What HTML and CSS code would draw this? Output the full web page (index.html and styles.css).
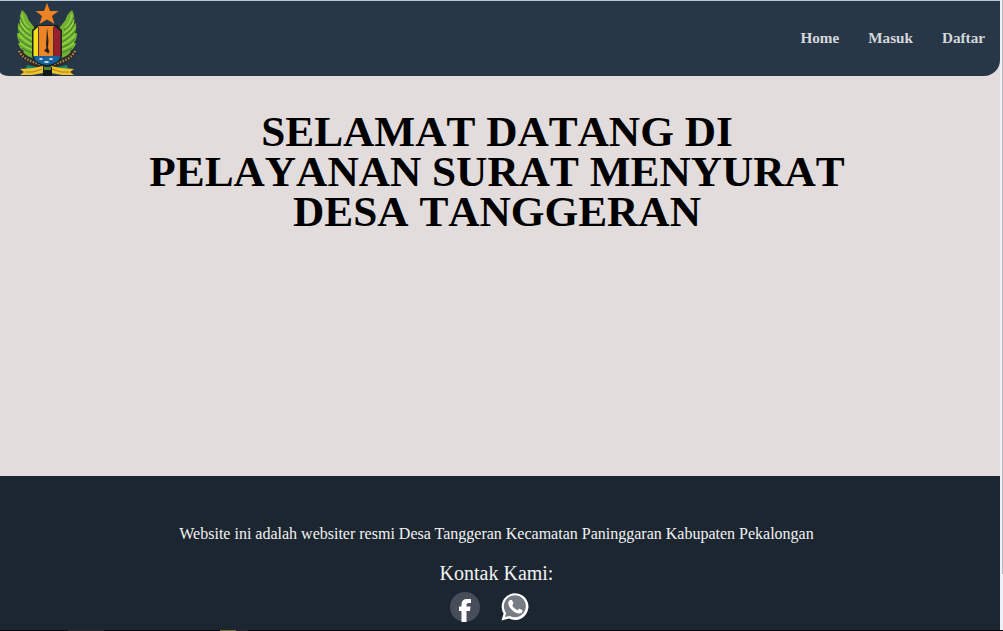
FILE: index.html
```html
<!DOCTYPE html>
<html lang="id">
<head>
<meta charset="utf-8">
<title>Desa Tanggeran</title>
<link rel="stylesheet" href="styles.css">
</head>
<body>
<div class="page">
  <header class="navbar">
    <svg class="logo" viewBox="0 0 64 74" width="64" height="74">
      <g id="wing">
        <path fill="#6fb232" d="M6 8Q11 12 12.500 18L18 25V56Q11 55 7 50L8 49Q3 46 2 41L4 41Q1 37 1 31L3 31Q1 26 2 21L4 22Q3 13 6 8Z"/>
        <path fill="none" stroke="#a0d345" stroke-width="1.200" d="M6 12Q7 21 13 26M4 18Q6 26 14 31M3 25Q7 33 16 37M3 33Q8 39 17 43M4 41Q10 46 17 48"/>
        <path fill="none" stroke="#356c27" stroke-width="0.800" d="M4 15Q6 23 14 28M3 22Q6 29 15 34M3 29Q8 36 16 40M3 37Q8 43 17 46M6 46Q12 50 17 51"/>
        <path fill="none" stroke="#2c2820" stroke-width="5" d="M3 49Q9 59 24 63"/>
        <path fill="none" stroke="#b08756" stroke-width="2.500" stroke-dasharray="1.500 1.500" d="M3 49Q8 59 25 62"/>
      </g>
      <use href="#wing" transform="matrix(-1 0 0 1 62 0)"/>
      <path fill="#ee8121" d="M31 1L34 9H42.500L36 14 38.500 22 31 17.500 23.500 22 26 14 19.500 9H28Z"/>
      <path fill="#18211e" d="M16 28Q19 26 21 23H41Q43 26 46 28V54Q44 62 31 65 18 62 16 54Z"/>
      <path fill="#f2df1d" d="M17.500 29L22 25V54H17.500Z"/>
      <path fill="#ee8424" d="M22 24H38V54H22Z"/>
      <path fill="#971f32" d="M38 24L44.500 29V54H38Z"/>
      <path fill="#222" d="M22 25H22.800V54H22ZM37.200 25H38V54H37.200ZM31 26L31.800 32 32.500 39 32 46 33.500 50 32 51.500 30.500 50 28 49 30.500 46 30 42 30.500 35Z"/>
      <path fill="#17609b" d="M17.500 54H44.500Q43 62 31 63 19 62 17.500 54Z"/>
      <path fill="none" stroke="#eff8ff" stroke-width="1.600" stroke-linecap="round" d="M24 57H26M34 57H36M29 60H32"/>
      <path fill="#16866d" d="M11 63L20 65 18 70 10 66ZM51 63L42 65 44 70 52 66Z"/>
      <path fill="#eac52c" d="M4 67L17 66 27 64V71L16 73H4L8 70ZM58 67L45 66 35 64V71L46 73H58L54 70Z"/>
      <path fill="none" stroke="#b67625" d="M9 70L17 70 26 67M53 70L45 70 36 67"/>
      <path fill="#10191a" d="M27 65H36V74H27Z"/>
      <path fill="#53882c" d="M28 65H35V68H28Z"/>
    </svg>
    <nav class="menu"><a>Home</a><a>Masuk</a><a>Daftar</a></nav>
  </header>
  <main class="hero">
    <h1>SELAMAT DATANG DI<br>PELAYANAN SURAT MENYURAT<br>DESA TANGGERAN</h1>
  </main>
  <footer class="footer">
    <p class="about">Website ini adalah websiter resmi Desa Tanggeran Kecamatan Paninggaran Kabupaten Pekalongan</p>
    <p class="contact">Kontak Kami:</p>
    <div class="social">
      <svg viewBox="0 0 30 30" width="30" height="30">
        <circle cx="15" cy="15" r="15" fill="#484e59"/>
        <path fill="#fff" d="M11.500 30V19H9V14.500H11.500V12.500Q11.500 7 17 7H21V11H18.500Q16.500 11 16.500 13V14.500H20.500L20 19H16.500V30Z"/>
      </svg>
      <svg viewBox="0 0 30 30" width="30" height="30">
        <path fill="#fff" d="M1.500 28.500L3.600 21.500A13.400 13.400 0 1 1 9 26.500Z"/>
        <path fill="#777c84" d="M4.900 25.100L6.200 21A11 11 0 1 1 9.800 24Z"/>
        <path fill="#fff" d="M10 8H12L13.500 11.500 12.200 13.500Q14 17 17.500 18.300L19.200 16.600 22.500 18.200Q22.500 21.500 18.800 21.500 14.500 21 11 17 8 13.500 8.300 10.500 8.600 8.700 10 8Z"/>
      </svg>
    </div>
  </footer>
</div>
<div class="scrollbar"><div class="thumb"></div></div>
<div class="edge"><i class="dim"></i><i class="gold"></i><i class="dim small"></i></div>
</body>
</html>
```
FILE: styles.css
```css
* { box-sizing: border-box; }
body {
  margin: 0;
  width: 1003px;
  height: 631px;
  overflow: hidden;
  display: grid;
  grid-template: 630px 1px / 1000px 3px;
  background: #e2dcdc;
  font-family: "Liberation Serif", "Times New Roman", serif;
}
.page {
  display: flex;
  flex-direction: column;
  border-top: 1px solid #b9c9d4;
}
.navbar {
  height: 75px;
  display: flex;
  align-items: flex-start;
  justify-content: space-between;
  padding: 1px 15px 0 16px;
  background: #283747;
  border-radius: 0 0 16px 10px / 0 0 16px 4px;
}
.logo { display: block; }
.menu {
  display: flex;
  gap: 29px;
  padding-top: 27px;
  color: #d5d8dc;
  font-size: 15.2px;
  font-weight: bold;
  line-height: 17px;
}
.hero { height: 400px; padding-top: 36px; }
h1 {
  width: 994px;
  margin: 0;
  color: #000;
  font-size: 42px;
  line-height: 40px;
  font-kerning: none;
  text-align: center;
  transform: scaleX(1.031);
}
.footer {
  flex: 1;
  display: flex;
  flex-direction: column;
  align-items: center;
  padding: 49px 7px 0 0;
  background: #1c2630;
  color: #f2f3f4;
}
.footer p { margin: 0; white-space: nowrap; }
.about { font-size: 16px; line-height: 18px; }
.contact { padding-top: 18px; font-size: 20px; line-height: 24px; }
.social { display: flex; gap: 20px; padding: 7px 13px 0 0; }
.social svg { display: block; }
.scrollbar { background: #edf0f5; }
.thumb { height: 574px; border-right: 1px solid #b7b8bd; }
.edge { grid-column: 1 / 3; display: flex; padding-left: 68px; background: #080a10; }
.dim { width: 36px; margin-right: 116px; background: #292426; }
.gold { width: 16px; background: #76702c; }
.small { width: 12px; }
```
